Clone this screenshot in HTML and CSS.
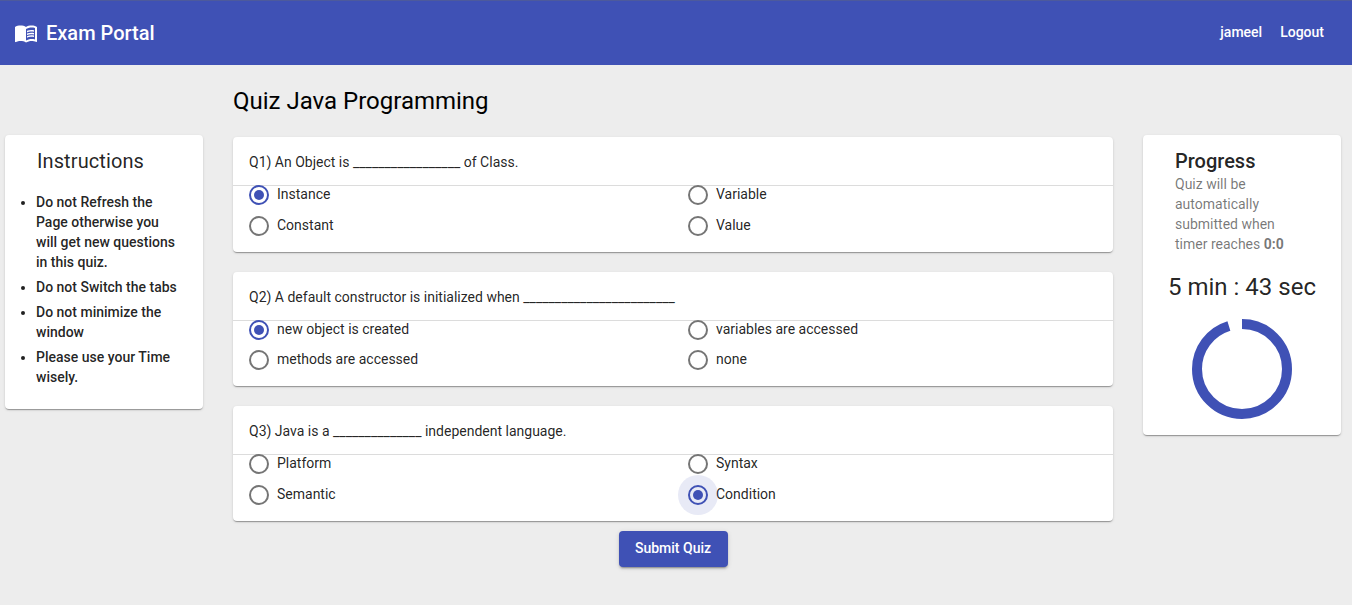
FILE: index.html
```html
<!DOCTYPE html>
<html lang="en">
<head>
<meta charset="utf-8">
<title>Exam Portal</title>
<link rel="stylesheet" href="styles.css">
</head>
<body>
<header class="toolbar">
  <svg class="logo" viewBox="0 0 24 24" fill="currentColor"><path d="M21 5c-1.11-.35-2.33-.5-3.5-.5-1.95 0-4.05.4-5.5 1.5-1.45-1.1-3.55-1.5-5.5-1.5S2.45 4.9 1 6v14.65c0 .25.25.5.5.5.1 0 .15-.05.25-.05C3.1 20.45 5.05 20 6.5 20c1.95 0 4.05.4 5.5 1.5 1.35-.85 3.8-1.5 5.5-1.5 1.65 0 3.35.3 4.75 1.05.1.05.15.05.25.05.25 0 .5-.25.5-.5V6c-.6-.45-1.25-.75-2-1zm0 13.5c-1.1-.35-2.3-.5-3.5-.5-1.7 0-4.15.65-5.5 1.5V8c1.35-.85 3.8-1.5 5.5-1.5 1.2 0 2.4.15 3.5.5v11.5z"/><path d="M17.5 10.5c.88 0 1.73.09 2.5.26V9.24c-.79-.15-1.64-.24-2.5-.24-1.7 0-3.24.29-4.5.83v1.66c1.13-.64 2.7-.99 4.5-.99zM13 12.49v1.66c1.13-.64 2.7-.99 4.5-.99.88 0 1.73.09 2.5.26V11.9c-.79-.15-1.64-.24-2.5-.24-1.7 0-3.24.3-4.5.83zM17.5 14.33c-1.7 0-3.24.29-4.5.83v1.66c1.13-.64 2.7-.99 4.5-.99.88 0 1.73.09 2.5.26v-1.52c-.79-.16-1.64-.24-2.5-.24z"/></svg>
  <span class="brand">Exam Portal</span>
  <nav class="links"><a>jameel</a><a>Logout</a></nav>
</header>
<div class="layout">
  <aside class="card instructions">
    <h2 class="card-title">Instructions</h2>
    <ul class="rules">
      <li>Do not Refresh the Page otherwise you will get new questions in this quiz.</li>
      <li>Do not Switch the tabs</li>
      <li>Do not minimize the window</li>
      <li>Please use your Time wisely.</li>
    </ul>
  </aside>
  <main class="quiz">
    <h1 class="quiz-title">Quiz Java Programming</h1>
    <section class="card question">
      <p class="prompt">Q1) An Object is _________________ of Class.</p>
      <div class="options">
        <label class="option"><span class="radio checked"></span>Instance</label>
        <label class="option"><span class="radio"></span>Variable</label>
        <label class="option"><span class="radio"></span>Constant</label>
        <label class="option"><span class="radio"></span>Value</label>
      </div>
    </section>
    <section class="card question">
      <p class="prompt">Q2) A default constructor is initialized when ________________________</p>
      <div class="options">
        <label class="option"><span class="radio checked"></span>new object is created</label>
        <label class="option"><span class="radio"></span>variables are accessed</label>
        <label class="option"><span class="radio"></span>methods are accessed</label>
        <label class="option"><span class="radio"></span>none</label>
      </div>
    </section>
    <section class="card question">
      <p class="prompt">Q3) Java is a ______________ independent language.</p>
      <div class="options">
        <label class="option"><span class="radio"></span>Platform</label>
        <label class="option"><span class="radio"></span>Syntax</label>
        <label class="option"><span class="radio"></span>Semantic</label>
        <label class="option"><span class="radio checked focused"></span>Condition</label>
      </div>
    </section>
    <button class="submit">Submit Quiz</button>
  </main>
  <aside class="card progress">
    <h2 class="card-title strong">Progress</h2>
    <p class="subtitle">Quiz will be automatically submitted when timer reaches <b>0:0</b></p>
    <p class="timer">5 min : 43 sec</p>
    <svg class="ring" viewBox="0 0 100 100"><circle cx="50" cy="50" r="45" fill="none" stroke="#3f51b5" stroke-width="10" pathLength="360" stroke-dasharray="343 360" transform="rotate(-90 50 50)"/></svg>
  </aside>
</div>
</body>
</html>
```

FILE: styles.css
```css
* { box-sizing: border-box; }
body {
  margin: 0;
  height: 605px;
  overflow: hidden;
  background: #ededed;
  font: 400 14px/20px Roboto, sans-serif;
  color: rgba(0, 0, 0, .87);
}
h1, h2, p, ul { margin: 0; }
.toolbar {
  display: flex;
  align-items: center;
  height: 65px;
  padding: 0 28px 1px 14px;
  border-top: 1px solid #4d5a9c;
  background: #3f51b5;
  color: #fff;
}
.logo { width: 24px; height: 24px; margin-right: 8px; }
.brand { font-size: 20px; font-weight: 500; line-height: 32px; }
.links { display: flex; gap: 18px; margin-left: auto; padding-bottom: 2px; font-weight: 500; }
.layout {
  display: grid;
  grid-template-columns: 198px 880px 198px;
  column-gap: 30px;
  align-items: start;
  padding-left: 5px;
}
.card {
  border-radius: 4px;
  background: #fff;
  box-shadow: 0 2px 1px -1px rgba(0,0,0,.2), 0 1px 1px rgba(0,0,0,.14), 0 1px 3px rgba(0,0,0,.12);
}
.instructions { height: 274px; margin-top: 70px; padding: 10px 16px; }
.card-title { margin-left: 16px; font-size: 20px; line-height: 32px; font-weight: 400; letter-spacing: .1px; }
.card-title.strong { font-weight: 500; letter-spacing: 0; }
.rules { margin-top: 15px; padding: 0 10px 0 15px; font-weight: 500; }
.rules li { margin-bottom: 5px; }
.quiz { display: flex; flex-direction: column; }
.quiz-title { height: 72px; padding-top: 20px; font-size: 24px; line-height: 32px; font-weight: 400; color: #000; }
.question { height: 114.5px; margin-bottom: 20px; }
.prompt { height: 49px; padding: 15px 16px 0; border-bottom: 1px solid #dcdcdc; }
.options { display: grid; grid-template-columns: 439px 1fr; grid-auto-rows: 30.6px; padding-left: 16px; }
.option { display: flex; align-items: flex-start; line-height: 17px; }
.radio {
  position: relative;
  width: 20px;
  height: 20px;
  margin: -1px 8px 0 0;
  border: 2px solid #757575;
  border-radius: 50%;
}
.checked { border-color: #3f51b5; }
.checked::after { content: ""; position: absolute; inset: 3px; border-radius: 50%; background: #3f51b5; }
.focused::before { content: ""; position: absolute; inset: -12px; border-radius: 50%; background: rgba(63,81,181,.12); }
.submit {
  align-self: center;
  width: 109px;
  height: 36px;
  margin-top: -10px;
  padding: 0 0 2px;
  border: 0;
  border-radius: 4px;
  background: #3f51b5;
  color: #fff;
  font: 500 14px/34px Roboto, sans-serif;
  box-shadow: 0 3px 1px -2px rgba(0,0,0,.2), 0 2px 2px rgba(0,0,0,.14), 0 1px 5px rgba(0,0,0,.12);
}
.progress { display: flex; flex-direction: column; height: 300px; margin-top: 70px; padding: 10px 16px; }
.subtitle { width: 130px; margin: -3px 0 0 16px; color: rgba(0,0,0,.54); }
.subtitle b { font-weight: 700; }
.timer { margin: 17px 0 16px; text-align: center; font-size: 24px; line-height: 32px; white-space: nowrap; }
.ring { width: 100px; height: 100px; align-self: center; }
```
